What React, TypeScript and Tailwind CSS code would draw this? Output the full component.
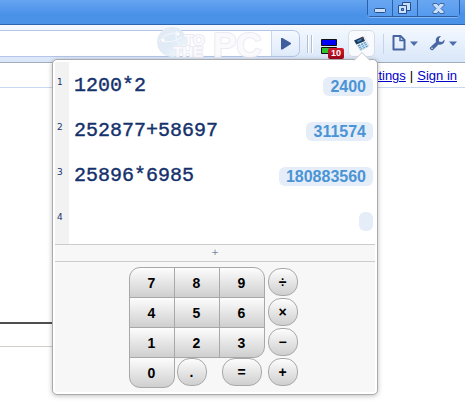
import { type ReactNode, useState } from 'react';

const results = ['2400', '311574', '180883560', ''];

export default function App() {
  return (
    <div className="relative flex min-h-screen flex-col overflow-hidden bg-white font-['Liberation_Sans',Arial,sans-serif]">
      <TitleBar />
      <Toolbar />
      <Page />
      <CalculatorPopup />
    </div>
  );
}

function TitleBar() {
  return (
    <header className="flex h-[25px] shrink-0 items-start justify-end border-b border-[#2d64ad] bg-linear-to-b from-[#65a4f0] to-[#4a91e8] to-60% pr-[5px]">
      <div className="flex h-[17px] rounded-b-[4px] border border-t-0 border-[#2b5fa8] shadow-[0_1px_0_#82b4f2]">
        <WindowButton label="Minimize" className="w-[25px] border-r">
          <rect x="6.500" y="8.500" width="11" height="4" rx="1" fill="#c9dffb" stroke="#24508f" />
        </WindowButton>
        <WindowButton label="Restore" className="w-[25px] border-r">
          <path d="M9.500 2.500h8v8h-8z" fill="#c9dffb" stroke="#24508f" />
          <path d="M5.500 5.500h8v8h-8z" fill="#c9dffb" stroke="#24508f" />
          <path d="M8.500 8.500h2v2h-2z" fill="#6ba5ef" stroke="#24508f" />
        </WindowButton>
        <WindowButton label="Close" className="w-[41px]">
          <path d="M15 3.500h4l1.500 2 1.500-2h4v2l-3 3 3 3v2h-4l-1.500-2-1.500 2h-4v-2l3-3-3-3z" fill="#c9dffb" stroke="#3c69a6" />
        </WindowButton>
      </div>
    </header>
  );
}

function WindowButton({ label, className, children }: { label: string; className: string; children: ReactNode }) {
  return (
    <button type="button" aria-label={label} className={`h-4 border-[#2b5fa8] bg-linear-to-b from-[#69a6f1] to-[#559aee] ${className}`}>
      <svg width="100%" height="16" className="block overflow-visible">{children}</svg>
    </button>
  );
}

function Toolbar() {
  return (
    <div className="flex h-[38px] shrink-0 items-start border-b border-[#a3adbd] bg-linear-to-b from-[#f5f9ff] to-[#d9e7f9] pt-[5px] pr-2">
      <form className="flex h-[27px] min-w-0 flex-1 rounded-r-[7px] border border-l-0 border-[#b4c5e8]" onSubmit={(e) => e.preventDefault()}>
        <div className="relative flex min-w-0 flex-1 bg-white">
          <input aria-label="Address" className="min-w-0 flex-1 bg-transparent px-2 text-sm outline-none" />
          <Watermark />
        </div>
        <button type="submit" aria-label="Go" className="flex w-7 items-center justify-center rounded-r-[6px] border-l border-[#c8d7ef] bg-linear-to-b from-[#f5f9ff] to-[#dfebfa]">
          <svg width="10" height="12"><path d="M0 0h1.500L10 5v1L1.500 11.500H0z" fill="#3f5e9c" /></svg>
        </button>
      </form>

      <div className="mt-[5px] ml-[7px] flex h-[18px] gap-[2px]">
        <span className="w-[2px] border-r border-white bg-[#b7bfcc]" />
        <span className="w-[2px] border-r border-white bg-[#b7bfcc]" />
      </div>

      <button type="button" aria-label="Tabs, 10" className="relative mt-[5px] ml-2 h-6 w-[23px]">
        <svg width="17" height="16" className="block">
          <path d="M.5.5h15v6H.5z" fill="#0000fa" stroke="#111" />
          <path d="M.5 8.500h15v6H.5z" fill="#2fc42f" stroke="#111" />
        </svg>
        <span className="absolute right-0 bottom-0 flex h-[11px] w-4 items-center justify-center rounded-[2px] bg-linear-to-b from-[#d3182d] to-[#9f0719] text-[9px] leading-none font-bold text-white">10</span>
      </button>

      <button type="button" aria-label="Calculator" className="ml-1 flex h-[27px] w-[27px] justify-center rounded-[5px] border border-[#d7dde7] bg-[#f8fafd] pt-1">
        <CalculatorIcon />
      </button>

      <span className="mt-1 ml-2 h-5 w-px bg-[#c5d4ea]" />

      <button type="button" aria-label="Page menu" className="mt-[5px] ml-2 flex h-4 items-center gap-1">
        <svg width="14" height="16" fill="none" stroke="#4665a2" strokeWidth="2">
          <path d="M1.500 1h7l4 4v9.500h-11z" strokeLinejoin="round" />
          <path d="M8 1v4.500h4.500" strokeWidth="1.500" />
        </svg>
        <Caret />
      </button>
      <button type="button" aria-label="Tools menu" className="mt-[5px] ml-[11px] flex h-4 items-center gap-1">
        <svg width="16" height="16">
          <path d="M1 12.500 7 7C6 3.500 8.500.5 12 1L10 3.500v3l3 .5 2.500-2.500C16 8 13 10.500 9.500 9.500L4 15c-1.500 1-4-1-3-2.500z" fill="#4866a2" />
          <circle cx="3" cy="13.200" r=".8" fill="#e3edfa" />
        </svg>
        <Caret />
      </button>
    </div>
  );
}

function Caret() {
  return <svg width="8" height="5"><path d="M0 .5h8L4 5z" fill="#4b6dab" /></svg>;
}

function CalculatorIcon() {
  return (
    <svg width="17" height="17">
      <path d="M2 6.500 11.500 2l4.500 9-8.500 5z" fill="#fff" stroke="#cbd5e0" strokeWidth=".7" />
      <path d="M1 5.500 10 1.500l2 4.500L3.500 9.500z" fill="#183a61" />
      <path d="m4 5.800 4-2 .8 1.400-4 2z" fill="#5182ad" />
      <path d="m8 3 2-1 .7 1.200-2 1z" fill="#8d4048" />
      <path d="m4.500 10.300 8-3.600 2.600 4.800-7.600 3.600z" fill="#609fca" />
      <path d="m5.500 12 8-3.600M6.600 13.700l7.800-3.700M7.200 9l2.800 5M10 7.800l2.600 5" stroke="#e8f3fb" strokeWidth=".8" />
    </svg>
  );
}

// Faint logo lying across the address field
function Watermark() {
  return (
    <svg width="116" height="34" viewBox="0 0 116 34" className="pointer-events-none absolute -top-1 right-0 overflow-visible" aria-hidden="true">
      <defs>
        <linearGradient id="globe" x1="0" y1="0" x2="1" y2="1">
          <stop offset="0" stopColor="#e6ebf4" />
          <stop offset=".5" stopColor="#dfebf6" />
          <stop offset="1" stopColor="#f8fbfe" />
        </linearGradient>
      </defs>
      <circle cx="17" cy="15" r="15" fill="url(#globe)" />
      <path d="M4 14q7-8 17-8M7 14q9 3 20-4M22 4q-3 7 2 13" fill="none" stroke="#f5f9fd" />
      <circle cx="8" cy="13" r="1.500" fill="#fff" />
      <circle cx="23" cy="7" r="1.500" fill="#fff" />
      <g fontFamily="Liberation Sans, Arial, sans-serif" fontWeight="bold" fill="#fafafd" stroke="#eceaf4" strokeWidth="2" paintOrder="stroke" strokeLinejoin="round">
        <text x="29" y="18" fontSize="15">TO</text>
        <text x="18" y="30" fontSize="15">THE</text>
        <text x="58" y="30" fontSize="35">PC</text>
      </g>
    </svg>
  );
}

function Page() {
  return (
    <main className="flex flex-1 flex-col text-[13px]">
      <nav className="flex h-[25px] items-center justify-end gap-1 border-b border-[#c9d7f1] pt-[2px] pr-2 text-black">
        <a href="#settings" className="text-[#0000cc] underline">Settings</a>
        <span>|</span>
        <a href="#signin" className="text-[#0000cc] underline">Sign in</a>
      </nav>
      <div className="mt-[234px] h-[2px] w-1/6 bg-[#4f4f4f]" />
      <div className="mt-[22px] h-px w-1/6 bg-[#d6cec6]" />
    </main>
  );
}

function CalculatorPopup() {
  const [lines, setLines] = useState(['1200*2', '252877+58697', '25896*6985', '']);

  return (
    <section aria-label="Calculator" className="absolute top-[59px] right-[87px] w-[326px] rounded-[5px] border border-[#a9abae] bg-white p-[2px] shadow-[0_1px_5px_rgba(0,0,0,0.25)]">
      <svg width="18" height="9" className="absolute -top-2 right-[6px]">
        <path d="M1 8.500 9 .5l8 8" fill="#fff" stroke="#c4c8ce" />
      </svg>
      <div className="bg-linear-to-r from-[#f2f2f2] from-[14px] to-white to-[14px] pb-[2px]">
        {lines.map((line, i) => (
          <div key={i} className="flex h-[45px] items-center pt-1 pr-[2px]">
            <span className="w-[14px] pb-2 pl-[2px] font-['DejaVu_Sans',sans-serif] text-[9px] text-[#17356f]">{i + 1}</span>
            <input
              aria-label={`Line ${i + 1}`}
              value={line}
              onChange={(e) => setLines(lines.map((old, n) => (n === i ? e.target.value : old)))}
              className="min-w-0 flex-1 bg-transparent pb-[2px] pl-[5px] font-['Liberation_Mono','Courier_New',monospace] text-[20px] text-[#14316c] outline-none [-webkit-text-stroke:0.4px_#14316c]"
            />
            <output className="h-[19px] rounded-[6px] bg-[#e5edf9] px-[7px] text-base leading-[19px] font-bold text-[#4a94d5]">{results[i]}</output>
          </div>
        ))}
      </div>
      <button type="button" aria-label="Toggle keypad" className="flex h-[18px] w-full items-center justify-center border-y border-[#cccccc] bg-[#f7f7f7] font-['DejaVu_Sans',sans-serif] text-[9px] text-[#72839a]">+</button>
      <Keypad />
    </section>
  );
}

function Keypad() {
  return (
    <div className="flex justify-center gap-1 bg-[#f7f7f7] py-[5px] pr-1">
      <div className="grid grid-cols-[45px_45px_45px] grid-rows-[30px_30px_30px_30px]">
        <Key className="rounded-tl-[11px]">7</Key>
        <Key>8</Key>
        <Key className="rounded-tr-[11px]">9</Key>
        <Key>4</Key>
        <Key>5</Key>
        <Key>6</Key>
        <Key>1</Key>
        <Key>2</Key>
        <Key className="rounded-br-[11px]">3</Key>
        <Key className="rounded-b-[11px]">0</Key>
        <RoundKey className="ml-[3px] w-[30px]">.</RoundKey>
        <RoundKey className="ml-[3px] w-10">=</RoundKey>
      </div>
      <div className="grid grid-rows-[30px_30px_30px_30px]">
        <RoundKey className="w-[30px]">÷</RoundKey>
        <RoundKey className="w-[30px]">×</RoundKey>
        <RoundKey className="w-[30px]">−</RoundKey>
        <RoundKey className="w-[30px]">+</RoundKey>
      </div>
    </div>
  );
}

function Key({ className = '', children }: { className?: string; children: ReactNode }) {
  return (
    <button type="button" className={`-mr-px -mb-px border border-[#a8a8a8] bg-linear-to-b from-[#fdfdfd] to-[#cfcfcf] text-sm font-bold text-black ${className}`}>
      {children}
    </button>
  );
}

function RoundKey({ className, children }: { className: string; children: ReactNode }) {
  return (
    <button type="button" className={`my-px rounded-[13px] border border-[#a8a8a8] bg-linear-to-b from-[#fdfdfd] to-[#cfcfcf] text-sm leading-none font-bold text-black ${className}`}>
      {children}
    </button>
  );
}
